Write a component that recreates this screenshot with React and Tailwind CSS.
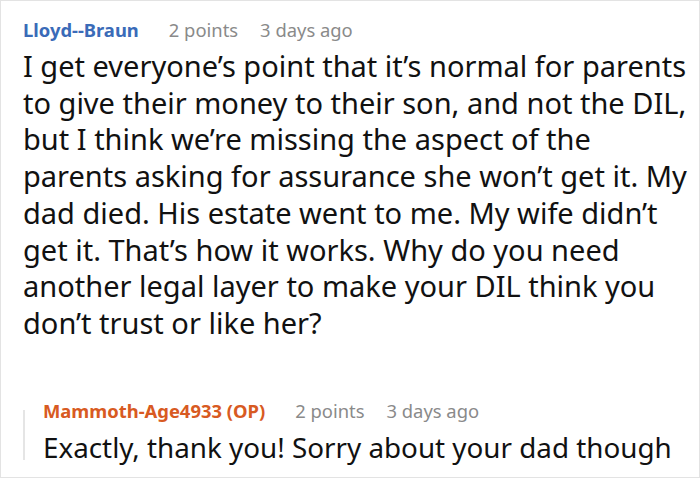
import React from "react";

const Meta = ({ name, color, points, time }) => (
  <div className="flex items-baseline whitespace-nowrap text-[18.4px] leading-[22px]">
    <span className={`font-bold ${color}`}>{name}</span>
    <span className="ml-[30px] text-[#8a8a8a]">{points}</span>
    <span className="ml-[22px] text-[#8a8a8a]">{time}</span>
  </div>
);

const App = () => {
  return (
    <div
      className="w-[700px] h-[478px] overflow-hidden bg-white border border-[#e3e3e3] text-[#111]"
      style={{ fontFamily: '"Noto Sans", "Open Sans", sans-serif' }}
    >
      <div className="pl-[22px] pt-[18px]">
        <Meta
          name="Lloyd--Braun"
          color="text-[#3a6bb8]"
          points="2 points"
          time="3 days ago"
        />
        <p className="mt-[7px] text-[29px] leading-[36.7px] w-[672px]">
          I get everyone’s point that it’s normal for parents to give their
          money to their son, and not the DIL, but I think we’re missing the
          aspect of the parents asking for assurance she won’t get it. My dad
          died. His estate went to me. My wife didn’t get it. That’s how it
          works. Why do you need another legal layer to make your DIL think you
          don’t trust or like her?
        </p>
        <div className="mt-[58px] flex">
          <div className="mt-[10px] w-[2px] h-[50px] bg-[#e5e5e5]" />
          <div className="ml-[18px]">
            <Meta
              name="Mammoth-Age4933 (OP)"
              color="text-[#d85a22]"
              points="2 points"
              time="3 days ago"
            />
            <p className="mt-[7px] text-[27.8px] leading-[36.7px] whitespace-nowrap">
              Exactly, thank you! Sorry about your dad though
            </p>
          </div>
        </div>
      </div>
    </div>
  );
};

export default App;
